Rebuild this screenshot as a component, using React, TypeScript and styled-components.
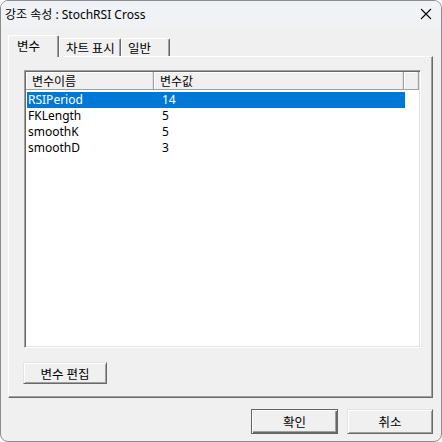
import React from "react";
import styled, { createGlobalStyle, css } from "styled-components";

const Global = createGlobalStyle`
  html, body { margin: 0; padding: 0; background: #ffffff; }
  body { font-family: "Noto Sans", "Noto Sans CJK KR", sans-serif; font-size: 12px; color: #000; }
  * { box-sizing: border-box; }
`;

const Window = styled.div`
  width: 442px;
  height: 442px;
  border: 1px solid #8c8c8c;
  border-radius: 8px;
  overflow: hidden;
  background: #f0f0f0;
  display: flex;
  flex-direction: column;
`;

const TitleBar = styled.div`
  height: 29px;
  display: flex;
  align-items: center;
  justify-content: space-between;
  padding: 0 9px 0 4px;
  background: linear-gradient(#eff3f8, #f0f1f3);
`;

const Title = styled.div`
  font-family: "Noto Sans", "Noto Sans CJK KR", sans-serif;
  font-size: 12px;
  margin-top: -3px;
`;

const Close = styled.div`
  width: 12px;
  height: 12px;
  display: flex;
  margin-top: -4px;
`;

const Body = styled.div`
  padding: 5px 8px 0 7px;
  display: flex;
  flex-direction: column;
`;

const TabStrip = styled.div`
  height: 21px;
  display: flex;
  align-items: flex-end;
  position: relative;
  z-index: 1;
`;

const Tab = styled.div<{ $active?: boolean; $w: number }>`
  width: ${(p) => p.$w}px;
  height: 18px;
  padding: 0 0 0 6px;
  display: flex;
  align-items: center;
  border-top: 1px solid #ffffff;
  border-left: 1px solid #ffffff;
  border-right: 1px solid #696969;
  box-shadow: inset -1px 0 #a0a0a0;
  border-radius: 2px 2px 0 0;
  background: #f0f0f0;
  font-family: "Noto Sans CJK KR", "Noto Sans", sans-serif;
  font-size: 12.5px;
  ${(p) =>
    p.$active &&
    css`
      height: 22px;
      margin-bottom: -1px;
      padding: 0 0 2px 8px;
    `}
`;

const Panel = styled.div`
  width: 425px;
  height: 342px;
  border-top: 1px solid #ffffff;
  border-left: 1px solid #ffffff;
  border-right: 1px solid #696969;
  border-bottom: 1px solid #696969;
  box-shadow: inset -1px -1px #a0a0a0;
  padding: 13px 11px 0 15px;
  display: flex;
  flex-direction: column;
`;

const ListView = styled.div`
  width: 397px;
  height: 278px;
  border-top: 1px solid #a0a0a0;
  border-left: 1px solid #a0a0a0;
  border-right: 1px solid #ffffff;
  border-bottom: 1px solid #ffffff;
  box-shadow: inset 1px 1px #696969, inset -1px -1px #e3e3e3;
  background: #ffffff;
  padding: 1px;
  display: flex;
  flex-direction: column;
`;

const Header = styled.div`
  height: 18px;
  display: grid;
  grid-template-columns: 128px 250px 1fr;
  background: #f0f0f0;
  border-bottom: 1px solid #a0a0a0;
`;

const HeadCell = styled.div`
  display: flex;
  align-items: center;
  padding-left: 6px;
  border-right: 1px solid #a0a0a0;
  box-shadow: inset -1px 0 #e3e3e3, inset 1px 1px #ffffff;
  font-family: "Noto Sans CJK KR", "Noto Sans", sans-serif;
  font-size: 12px;
`;

const Rows = styled.div`
  padding: 2px 0 0 1px;
  display: flex;
  flex-direction: column;
`;

const Row = styled.div<{ $selected?: boolean }>`
  height: 16px;
  width: 378px;
  display: grid;
  grid-template-columns: 127px 1fr;
  align-items: center;
  padding-left: 1px;
  font-size: 12px;
  ${(p) =>
    p.$selected &&
    css`
      background: #0078d7;
      color: #ffffff;
    `}
`;

const Cell = styled.div<{ $value?: boolean }>`
  padding-left: ${(p) => (p.$value ? "7px" : "0")};
  line-height: 16px;
`;

const Button = styled.button<{ $default?: boolean; $w: number; $h: number }>`
  width: ${(p) => p.$w}px;
  height: ${(p) => p.$h}px;
  font-family: "Noto Sans CJK KR", "Noto Sans", sans-serif;
  font-size: 12.5px;
  color: #000;
  background: #f0f0f0;
  padding: 0;
  border: 1px solid;
  border-color: #e3e3e3 #696969 #696969 #e3e3e3;
  box-shadow: inset 1px 1px #ffffff, inset -1px -1px #a0a0a0;
  display: flex;
  align-items: center;
  justify-content: center;
  ${(p) =>
    p.$default &&
    css`
      border: 1px solid #646464;
      box-shadow: inset 1px 1px #ffffff, inset -1px -1px #696969, inset -2px -2px #a0a0a0;
    `}
`;

const EditRow = styled.div`
  margin-top: 14px;
  margin-left: -1px;
  display: flex;
`;

const Footer = styled.div`
  margin-top: 11px;
  display: flex;
  justify-content: flex-end;
  gap: 9px;
`;

const rows = [
  { name: "RSIPeriod", value: "14" },
  { name: "FKLength", value: "5" },
  { name: "smoothK", value: "5" },
  { name: "smoothD", value: "3" },
];

export default function App() {
  return (
    <>
      <Global />
      <Window>
        <TitleBar>
          <Title>강조 속성 : StochRSI Cross</Title>
          <Close>
            <svg width="12" height="12" viewBox="0 0 12 12">
              <path d="M1 1 L11 11 M11 1 L1 11" stroke="#000" strokeWidth="1.1" />
            </svg>
          </Close>
        </TitleBar>
        <Body>
          <TabStrip>
            <Tab $active $w={51}>변수</Tab>
            <Tab $w={62}>차트 표시</Tab>
            <Tab $w={49}>일반</Tab>
          </TabStrip>
          <Panel>
            <ListView>
              <Header>
                <HeadCell>변수이름</HeadCell>
                <HeadCell>변수값</HeadCell>
                <HeadCell />
              </Header>
              <Rows>
                {rows.map((r, i) => (
                  <Row key={r.name} $selected={i === 0}>
                    <Cell>{r.name}</Cell>
                    <Cell $value>{r.value}</Cell>
                  </Row>
                ))}
              </Rows>
            </ListView>
            <EditRow>
              <Button $w={84} $h={22}>변수 편집</Button>
            </EditRow>
          </Panel>
          <Footer>
            <Button $default $w={87} $h={25}>확인</Button>
            <Button $w={86} $h={25}>취소</Button>
          </Footer>
        </Body>
      </Window>
    </>
  );
}
